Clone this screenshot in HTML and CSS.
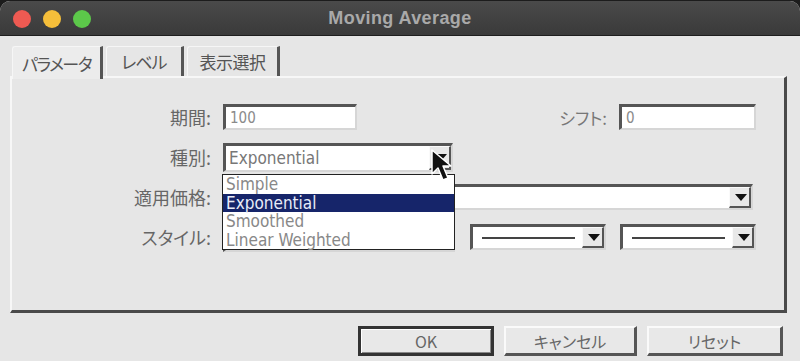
FILE: index.html
```html
<!DOCTYPE html>
<html lang="ja">
<head>
    <title>Moving Average</title>
    <link rel="stylesheet" href="styles.css">
</head>
<body>
    <div class="window">
        <div class="titlebar">
            <div class="lights">
                <span class="light red"></span>
                <span class="light yellow"></span>
                <span class="light green"></span>
            </div>
            <div class="title">Moving Average</div>
        </div>

        <div class="content">
            <div class="tabs">
                <div class="tab active">パラメータ</div>
                <div class="tab tab-level">レベル</div>
                <div class="tab tab-view">表示選択</div>
            </div>

            <div class="panel">
                <div class="row">
                    <span class="label">期間:</span>
                    <div class="field input w-period">100</div>
                    <span class="label-right">シフト:</span>
                    <div class="field input w-shift">0</div>
                </div>

                <div class="row">
                    <span class="label">種別:</span>
                    <div class="field select w-type tall">
                        <span class="value">Exponential</span>
                        <span class="arrow"></span>
                    </div>
                </div>

                <div class="row">
                    <span class="label">適用価格:</span>
                    <div class="field select w-price">
                        <span class="value"></span>
                        <span class="arrow"></span>
                    </div>
                </div>

                <div class="row">
                    <span class="label">スタイル:</span>
                    <div class="field select w-style1 tall">
                        <span class="value"></span>
                        <span class="arrow"></span>
                    </div>
                    <div class="field select w-style">
                        <span class="value"><span class="line"></span></span>
                        <span class="arrow"></span>
                    </div>
                    <div class="field select w-style">
                        <span class="value"><span class="line"></span></span>
                        <span class="arrow"></span>
                    </div>
                </div>

                <ul class="dropdown">
                    <li>Simple</li>
                    <li class="selected">Exponential</li>
                    <li>Smoothed</li>
                    <li>Linear Weighted</li>
                </ul>

                <svg class="cursor" width="30" height="40" viewBox="0 0 30 40">
                    <path d="M2 2 L2 26 L8 20 L13 32 L18 30 L13 18 L21 18 Z" fill="#111" stroke="#fff" stroke-width="1.5" stroke-linejoin="round"/>
                </svg>
            </div>

            <div class="buttons">
                <div class="button default">OK</div>
                <div class="button">キャンセル</div>
                <div class="button">リセット</div>
            </div>
        </div>
    </div>
</body>
</html>
```

FILE: styles.css
```css
html {
    background-color: #1c1c1c;
}

body {
    margin: 0;
    width: 800px;
    height: 361px;
    overflow: hidden;
    font-family: "Noto Sans CJK JP", "Noto Sans", sans-serif;
    font-feature-settings: "palt";
}

.window {
    width: 800px;
    height: 361px;
    background-color: #e6e6e6;
    border-radius: 10px 10px 0 0;
    overflow: hidden;
    margin-top: 1px;
}

.titlebar {
    position: relative;
    height: 34px;
    background: linear-gradient(#4a4a4a, #3a3a3a);
    border-bottom: 1px solid #1e1e1e;
    display: flex;
    align-items: center;
    justify-content: center;
}

.lights {
    position: absolute;
    left: 13px;
    top: 9px;
    display: flex;
    gap: 12px;
}

.light {
    width: 18px;
    height: 18px;
    border-radius: 50%;
}

.red {
    background-color: #ee5a52;
}

.yellow {
    background-color: #f5be3a;
}

.green {
    background-color: #5cc84a;
}

.title {
    font-family: "Liberation Sans", "DejaVu Sans", sans-serif;
    font-size: 18px;
    font-weight: bold;
    color: #a9a9a9;
    letter-spacing: 0.4px;
}

.content {
    padding: 10px 0 0 10px;
}

/* tabs */

.tabs {
    display: flex;
    height: 30px;
    padding-left: 2px;
}

.tab {
    height: 30px;
    box-sizing: border-box;
    display: flex;
    align-items: center;
    justify-content: center;
    white-space: nowrap;
    font-size: 17px;
    letter-spacing: -0.5px;
    color: #555;
    border-right: 3px solid #555;
    border-top: 1px solid #f6f6f6;
    border-left: 1px solid #f6f6f6;
    margin-right: 3px;
    border-radius: 3px 0 0 0;
}

.tab.active {
    width: 91px;
    background-color: #ececec;
    height: 33px;
    margin-bottom: -3px;
    position: relative;
    z-index: 1;
    margin-right: 3px;
    letter-spacing: -1.5px;
}

.tab-level {
    width: 78px;
    letter-spacing: -1px;
}

.tab-view {
    width: 93px;
}

/* panel */

.panel {
    position: relative;
    width: 777px;
    height: 237px;
    box-sizing: border-box;
    border-top: 2px solid #f7f7f7;
    border-left: 2px solid #f7f7f7;
    border-right: 3px solid #4a4a4a;
    border-bottom: 3px solid #4a4a4a;
    padding-top: 19px;
}

.row {
    display: flex;
    align-items: center;
    height: 40px;
}

.label {
    width: 199px;
    text-align: right;
    font-size: 18px;
    color: #666;
    margin-right: 12px;
}

.label-right {
    margin-left: auto;
    margin-right: 12px;
    font-size: 17px;
    color: #777;
}

.field {
    box-sizing: border-box;
    height: 26px;
    background-color: #fff;
    border-top: 3px solid #555;
    border-left: 3px solid #555;
    border-right: 2px solid #d6d6d6;
    border-bottom: 2px solid #d6d6d6;
    font-family: "DejaVu Sans Condensed", "DejaVu Sans", sans-serif;
    font-size: 15px;
    color: #8a8a8a;
    display: flex;
    align-items: center;
}

.field.tall {
    height: 29px;
}

.input {
    padding-left: 4px;
}

.w-period {
    width: 134px;
}

.w-shift {
    width: 137px;
    margin-right: 28px;
}

.w-type {
    width: 230px;
}

.w-price {
    width: 530px;
}

.w-style1 {
    width: 232px;
    margin-right: 15px;
}

.w-style {
    width: 136px;
    margin-right: 14px;
}

.select .value {
    flex: 1;
    padding-left: 3px;
    display: flex;
    align-items: center;
    font-size: 17px;
    color: #777;
}

.select .line {
    display: block;
    height: 2px;
    width: 93px;
    margin-left: 6px;
    background-color: #444;
}

.arrow {
    position: relative;
    width: 22px;
    height: 100%;
    box-sizing: border-box;
    background-color: #e8e8e8;
    border-right: 2px solid #555;
    border-bottom: 2px solid #555;
    border-top: 1px solid #fafafa;
    border-left: 1px solid #fafafa;
}

.arrow:after {
    content: "";
    position: absolute;
    left: 5px;
    top: 50%;
    margin-top: -3px;
    border-left: 6px solid transparent;
    border-right: 6px solid transparent;
    border-top: 7px solid #111;
}

/* open list of the 種別 select */

.dropdown {
    position: absolute;
    left: 210px;
    top: 96px;
    width: 233px;
    height: 76px;
    box-sizing: border-box;
    margin: 0;
    padding: 0;
    list-style: none;
    background-color: #fff;
    border: 1px solid #222;
    font-family: "DejaVu Sans Condensed", "DejaVu Sans", sans-serif;
    font-size: 17px;
    color: #888;
    z-index: 2;
}

.dropdown li {
    height: 18.5px;
    line-height: 18px;
    padding-left: 3px;
}

.dropdown li.selected {
    background-color: #16256a;
    color: #e8ecf8;
}

.cursor {
    position: absolute;
    left: 418px;
    top: 70px;
    z-index: 3;
}

/* buttons */

.buttons {
    display: flex;
    justify-content: flex-end;
    gap: 10px;
    padding-right: 17px;
    margin-top: 13px;
}

.button {
    width: 136px;
    height: 30px;
    box-sizing: border-box;
    display: flex;
    align-items: center;
    justify-content: center;
    font-size: 16px;
    color: #666;
    background-color: #e8e8e8;
    border-top: 2px solid #fafafa;
    border-left: 2px solid #fafafa;
    border-right: 3px solid #555;
    border-bottom: 3px solid #555;
}

.button:nth-child(2) {
    width: 133px;
}

.button.default {
    border: 3px solid #333;
    box-shadow: inset 1px 1px 0 #fff, inset -1px -1px 0 #888;
}
```
